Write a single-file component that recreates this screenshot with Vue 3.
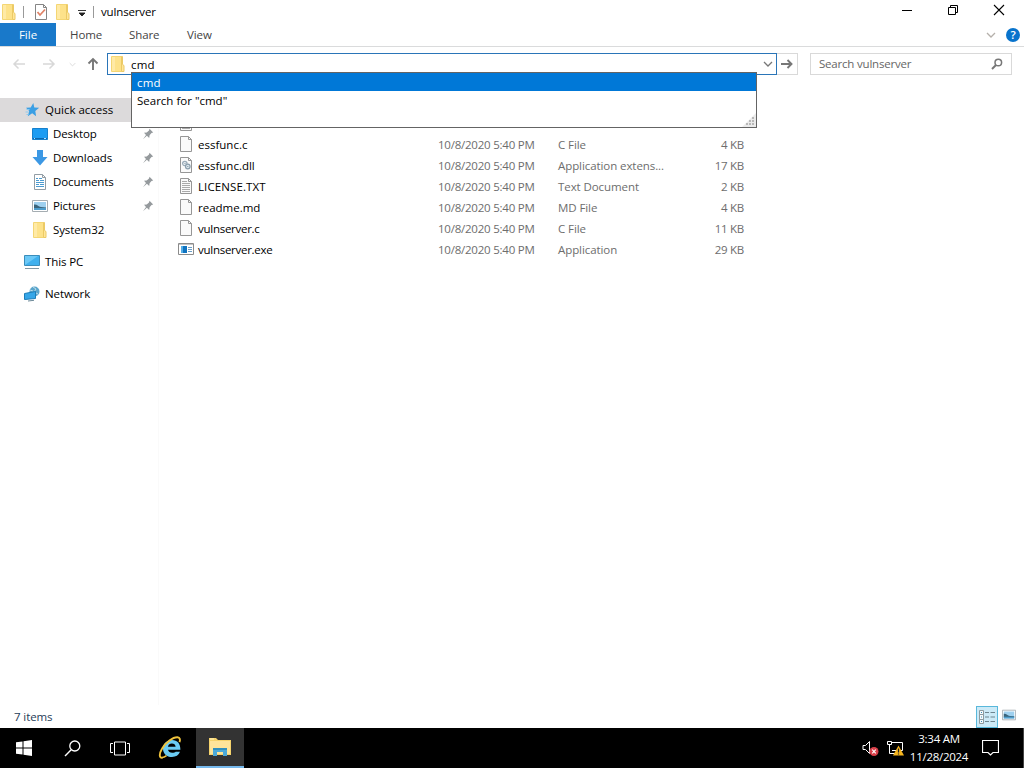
<template>
    <div class="desktop">
        <svg class="sprite" width="0" height="0">
            <symbol id="folder" viewBox="0 0 16 16">
                <path d="M1.500.5h10v15h-10z" fill="#fde28a" stroke="#f4d674" />
                <path d="M2 1h3v14H2z" fill="#ffeaa6" />
                <path d="M11.500.5h1v8l1.500 1v6h-2.500z" fill="#ffe699" stroke="#ecca65" />
            </symbol>
            <symbol id="page" viewBox="0 0 16 16">
                <path d="M2.500.5h8l3 3v12h-11z" fill="#fafafa" stroke="#969696" />
                <path d="M10.500.5v3h3" fill="none" stroke="#969696" />
            </symbol>
            <symbol id="text" viewBox="0 0 16 16">
                <use href="#page" />
                <path d="M4 3.500h5M4 5.500h8M4 7.500h8M4 9.500h8M4 11.500h8M4 13.500h8" stroke="#aaa" />
            </symbol>
            <symbol id="dll" viewBox="0 0 16 16">
                <use href="#page" />
                <circle cx="6.800" cy="6.500" r="2.200" fill="#eef3f6" stroke="#9aabb8" stroke-width="1.200" />
                <circle cx="9.800" cy="9.500" r="2.300" fill="#dce7ed" stroke="#8c9fad" stroke-width="1.200" />
                <path d="M6.500 6.500h1M9.300 9.500h1" stroke="#7c909e" />
            </symbol>
            <symbol id="exe" viewBox="0 0 16 16">
                <path d="M.5 2.500h15v11H.5z" fill="#fff" stroke="#8b8b8b" />
                <path d="M1 3h14v1H1z" fill="#c4c4c4" />
                <path d="M3 5h6v7H3z" fill="#0f73c0" />
                <path d="M3 5h2v7H3z" fill="#55aee6" />
                <path d="M10 6.500h4M10 8.500h4M10 10.500h4" stroke="#6b9fc8" />
            </symbol>
            <symbol id="star" viewBox="0 0 16 16">
                <path d="M9.300 1l1 4.600 4.900.1-3.900 3.200.8 5.400-3.900-3-4.400 2.900 1.400-5.100L2 5.800l4.700-.2z" fill="#3b9fe4" />
                <path d="M2.500 7.500h3M1.500 10h3M2.500 12.500h2" stroke="#8dcaf0" />
            </symbol>
            <symbol id="desktop" viewBox="0 0 16 16">
                <path d="M.5 2.500h15v11H.5z" fill="#1c9cf2" stroke="#1680cc" />
                <path d="M1 12h14v1H1z" fill="#0a66ad" />
                <path d="M2 12.500h1M12 12.500h2" stroke="#b7e1ff" />
            </symbol>
            <symbol id="download" viewBox="0 0 16 16">
                <path d="M5 0h6v7h4.500L8 15.500.5 7H5z" fill="#3c98e4" />
            </symbol>
            <symbol id="document" viewBox="0 0 16 16">
                <path d="M2.500.5h8l3 3v12h-11z" fill="#fff" stroke="#929da5" />
                <path d="M10.500.5v3h3" fill="none" stroke="#929da5" />
                <path d="M4 4.500h2M7 4.500h3M4 6.500h3M8 6.500h4M4 8.500h8M4 10.500h3M8 10.500h4M4 12.500h8" stroke="#4c9bd0" />
            </symbol>
            <symbol id="picture" viewBox="0 0 16 16">
                <path d="M.5 2.500h15v11H.5z" fill="#fff" stroke="#a5adb2" />
                <path d="M2 4h12v8H2z" fill="#9ed0ef" />
                <path d="M2 6.500c3-.5 4 2 7 2.500l5 .5v1H2z" fill="#3a647b" />
                <path d="M2 10h12v2H2z" fill="#4d9ccb" />
            </symbol>
            <symbol id="pc" viewBox="0 0 16 16">
                <path d="M.5 1.500h15v10H.5z" fill="#6bc8f6" stroke="#3a8dbb" />
                <path d="M1 11L14 2h1v9z" fill="#3fb0ee" />
                <path d="M1 14.500h14" stroke="#8198a5" />
            </symbol>
            <symbol id="network" viewBox="0 0 16 16">
                <circle cx="10.500" cy="5.500" r="5" fill="#5aa5cc" />
                <path d="M9 1l3 2-2 3 4 2M6 4l3 1" stroke="#bcdce8" fill="none" />
                <path d="M.5 7.500l11-2v7l-11 1z" fill="#35a6e8" stroke="#1c7db8" />
                <path d="M4 15l6-.7" stroke="#6c8998" />
            </symbol>
            <symbol id="pin" viewBox="0 0 12 12">
                <path d="M7.500.8l3.700 3.700-1.700.5L7.600 7.300l-.4 2.700-2.300-2.200L1 11.300 4 7 2 4.800l2.700-.3L7 2.500z" fill="#959a9d" />
            </symbol>
            <symbol id="back" viewBox="0 0 14 12">
                <path d="M13 6H2M6.500 1.500L2 6l4.500 4.500" fill="none" stroke="currentColor" stroke-width="1.500" />
            </symbol>
            <symbol id="chevron" viewBox="0 0 10 6">
                <path d="M1 1l4 4 4-4" fill="none" stroke="currentColor" stroke-width="1.300" />
            </symbol>
        </svg>

        <header class="titlebar">
            <svg class="icon title-folder"><use href="#folder" /></svg>
            <i class="divider"></i>
            <svg class="icon check-icon" viewBox="0 0 16 16">
                <path d="M2.500.5h8l3 3v12h-11z" fill="#fff" stroke="#858585" />
                <path d="M10.500.5v3h3" fill="none" stroke="#858585" />
                <path d="M4.500 8l2.500 3 5-5.500" fill="none" stroke="#e08367" stroke-width="1.800" />
            </svg>
            <svg class="icon new-folder"><use href="#folder" /></svg>
            <svg class="customize" viewBox="0 0 8 7"><path d="M0 .5h8M1 3h6L4 6z" stroke="#222" fill="#222" stroke-width=".9" /></svg>
            <i class="divider second"></i>
            <span class="title">vulnserver</span>
            <div class="window-buttons">
                <svg viewBox="0 0 12 12"><path d="M1 6.500h10" stroke="#000" /></svg>
                <svg viewBox="0 0 12 12"><path d="M1.500 3.500h7v7h-7zM3.500 3V1.500h7v7H9" fill="none" stroke="#000" /></svg>
                <svg viewBox="0 0 12 12"><path d="M1 1l10 10M11 1L1 11" stroke="#000" stroke-width="1.100" /></svg>
            </div>
        </header>

        <nav class="ribbon">
            <span class="file-tab">File</span>
            <span class="tab home">Home</span>
            <span class="tab share">Share</span>
            <span class="tab view">View</span>
            <svg class="ribbon-chevron"><use href="#chevron" /></svg>
            <span class="help">?</span>
        </nav>

        <div class="address-row">
            <div class="history">
                <svg><use href="#back" /></svg>
                <svg class="forward"><use href="#back" /></svg>
                <svg class="recent"><use href="#chevron" /></svg>
                <svg class="up" viewBox="0 0 12 14"><path d="M6 13V2M1.500 6.500L6 2l4.500 4.500" fill="none" stroke="#777" stroke-width="1.900" /></svg>
            </div>
            <div class="address">
                <svg class="icon"><use href="#folder" /></svg>
                <span>cmd</span>
                <svg class="address-chevron"><use href="#chevron" /></svg>
                <div class="suggestions">
                    <div class="suggestion selected">cmd</div>
                    <div class="suggestion">Search for "cmd"</div>
                    <svg class="grip" viewBox="0 0 14 14">
                        <path d="M14 0v14H0z" fill="#ebebeb" />
                        <path d="M10 4h2v2h-2zM7 7h2v2H7zM10 7h2v2h-2zM4 10h2v2H4zM7 10h2v2H7zM10 10h2v2h-2z" fill="#b9b9b9" />
                    </svg>
                </div>
            </div>
            <div class="go"><svg viewBox="0 0 14 12"><path d="M1 6h10.500M7.500 2l4 4-4 4" fill="none" stroke="#777" stroke-width="1.900" /></svg></div>
            <div class="search">
                <span>Search vulnserver</span>
                <svg viewBox="0 0 12 12"><circle cx="7.300" cy="4.500" r="3.300" fill="none" stroke="#777" stroke-width="1.500" /><path d="M5 7L1 11" stroke="#777" stroke-width="1.900" /></svg>
            </div>
        </div>

        <main class="explorer">
            <aside class="sidebar">
                <div v-for="item in places" :key="item.name" class="place" :class="item.type">
                    <svg class="icon"><use :href="'#' + item.icon" /></svg>
                    <span>{{ item.name }}</span>
                    <svg v-if="item.pinned" class="pin"><use href="#pin" /></svg>
                </div>
            </aside>
            <section class="files">
                <div v-for="file in files" :key="file.name" class="file">
                    <svg class="icon"><use :href="'#' + file.icon" /></svg>
                    <span class="name" :class="{ tight: file.tight, wide: file.wide }">{{ file.name }}</span>
                    <span class="date">10/8/2020 5:40 PM</span>
                    <span class="type">{{ file.type }}</span>
                    <span class="size">{{ file.size }}</span>
                </div>
            </section>
        </main>

        <footer class="status">
            <span>7 items</span>
            <div class="details">
                <svg viewBox="0 0 16 14">
                    <path d="M.5.500h4v4h-4zM.5 4.500h4v5h-4zM.5 9.500h4v4h-4z" fill="#f5fafc" stroke="#8d9a9f" />
                    <path d="M6 2.500h4M11.500 2.500H16M6 7h4M11.500 7H16M6 11.500h4M11.500 11.500H16" stroke="#6f858f" />
                    <path d="M2 2.500h1M2 7h1M2 11.500h1" stroke="#3a8db5" />
                </svg>
            </div>
            <svg class="thumbs"><use href="#picture" /></svg>
        </footer>

        <footer class="taskbar">
            <div class="task">
                <svg width="16" height="16" viewBox="0 0 16 16"><path d="M0 2.300L6.500 1.400v6.100H0zM7.500 1.200L16 0v7.500H7.500zM0 8.500h6.500v6.100L0 13.700zM7.500 8.500H16V16l-8.500-1.200z" fill="#fff" /></svg>
            </div>
            <div class="task">
                <svg width="17" height="17" viewBox="0 0 17 17"><circle cx="10.800" cy="6" r="5" fill="none" stroke="#fff" stroke-width="1.300" /><path d="M7.200 9.700L1 16" stroke="#fff" stroke-width="1.400" /></svg>
            </div>
            <div class="task">
                <svg width="20" height="15" viewBox="0 0 20 15"><path d="M4.500 1h11v13h-11zM3 2.500H.5v9H3M17 2.500h2.500v9H17" fill="none" stroke="#fff" /></svg>
            </div>
            <div class="task">
                <svg width="24" height="24" viewBox="0 0 24 24">
                    <path d="M22 15.800c-1.300 3.400-4.200 5.200-8 5.200-5.300 0-9-3.500-9-8.300 0-5 3.700-8.700 8.900-8.700 5.500 0 8.700 3.700 8.500 9.800H10c.4 2 2 3 4.200 3 1.700 0 2.800-.3 3.500-1z" fill="#6bcbf2" />
                    <path d="M9.900 10.700c.5-2.100 1.900-3.100 4-3.100s3.400 1.100 3.700 3.100z" fill="#000" />
                    <path d="M4.500 21.700c-3.600.6-3.500-4-.5-9C7.500 6.500 15.200 1 19.500 1.300c2.500.2 2.900 2.300 2 4.800" fill="none" stroke="#f0c33c" stroke-width="1.900" />
                    <path d="M4 21.500c1.400.1 3-.7 4.500-1.900" fill="none" stroke="#f0c33c" stroke-width="1.600" />
                </svg>
            </div>
            <div class="task active">
                <svg width="22" height="20" viewBox="0 0 22 20">
                    <path d="M0 1h7l2 2h13v15H0z" fill="#f5d36c" />
                    <path d="M1 4h20v13H1z" fill="#fde49a" />
                    <path d="M4 19v-8h14v8h-4v-4H8v4z" fill="#4ba9d8" />
                    <path d="M4 11h14v2H4z" fill="#2f8fbd" />
                    <path d="M1 2h4" stroke="#fff3bd" />
                </svg>
            </div>
            <div class="tray">
                <svg class="volume" width="18" height="16" viewBox="0 0 18 16">
                    <path d="M1 5.500h2.500l4-4v12l-4-4H1z" fill="none" stroke="#fff" />
                    <circle cx="12" cy="11.500" r="4.500" fill="#d9404a" />
                    <path d="M10.200 9.700l3.600 3.600M13.800 9.700l-3.600 3.600" stroke="#fff" stroke-width="1.200" />
                </svg>
                <svg class="wired" width="17" height="16" viewBox="0 0 17 16">
                    <path d="M.5 1.500h4v3h-4zM5 2.500h10.500v8H5M2.500 5v8.500H8" fill="none" stroke="#fff" />
                    <path d="M11.500 5.500L17 15.500H6z" fill="#f6b51e" />
                    <path d="M11.500 8.500v4M11.500 13.500v1" stroke="#222" stroke-width="1.200" />
                </svg>
                <div class="clock"><span>3:34 AM</span><span>11/28/2024</span></div>
                <svg class="message" width="17" height="16" viewBox="0 0 17 16"><path d="M.5.500h16v12H11L8.500 15 6 12.500H.5z" fill="none" stroke="#fff" stroke-width="1.200" /></svg>
            </div>
        </footer>
    </div>
</template>

<script setup>
    const places = [
        { name: 'Quick access', icon: 'star', type: 'root current' },
        { name: 'Desktop', icon: 'desktop', pinned: true },
        { name: 'Downloads', icon: 'download', pinned: true },
        { name: 'Documents', icon: 'document', pinned: true },
        { name: 'Pictures', icon: 'picture', pinned: true },
        { name: 'System32', icon: 'folder' },
        { name: 'This PC', icon: 'pc', type: 'root spaced' },
        { name: 'Network', icon: 'network', type: 'root spaced' }
    ]

    const files = [
        { name: 'COMPILING.TXT', icon: 'text', type: 'Text Document', size: '3 KB' },
        { name: 'essfunc.c', icon: 'page', type: 'C File', size: '4 KB' },
        { name: 'essfunc.dll', icon: 'dll', type: 'Application extens...', size: '17 KB' },
        { name: 'LICENSE.TXT', icon: 'text', type: 'Text Document', size: '2 KB', wide: true },
        { name: 'readme.md', icon: 'page', type: 'MD File', size: '4 KB' },
        { name: 'vulnserver.c', icon: 'page', type: 'C File', size: '11 KB', tight: true },
        { name: 'vulnserver.exe', icon: 'exe', type: 'Application', size: '29 KB', tight: true }
    ]
</script>

<style>
    body {
        margin: 0;
        overflow: hidden;
    }
</style>

<style scoped>
    .desktop {
        display: flex;
        flex-direction: column;
        width: 1024px;
        height: 768px;
        background: #fff;
        color: #000;
        font-family: "Open Sans", "Noto Sans", sans-serif;
        font-size: 11.5px;
        line-height: 16px;
        white-space: nowrap;
    }

    .desktop * {
        box-sizing: border-box;
    }

    svg {
        display: block;
        flex: none;
    }

    .sprite {
        position: absolute;
    }

    .icon {
        width: 16px;
        height: 16px;
    }

    .titlebar {
        display: flex;
        align-items: center;
        height: 23px;
        flex: none;
    }

    .title-folder {
        margin-left: 1px;
        margin-right: 6px;
    }

    .divider {
        width: 1px;
        height: 12px;
        background: #999;
    }

    .check-icon {
        margin-left: 9px;
    }

    .new-folder {
        margin-left: 6px;
    }

    .customize {
        width: 8px;
        height: 7px;
        margin-left: 7px;
        margin-top: 3px;
    }

    .second {
        margin-left: 7px;
    }

    .title {
        margin-left: 7px;
        letter-spacing: -0.15px;
    }

    .window-buttons {
        display: flex;
        gap: 34px;
        margin-left: auto;
        margin-right: 19px;
        margin-bottom: 3px;
    }

    .window-buttons svg {
        width: 12px;
        height: 12px;
    }

    .ribbon {
        display: flex;
        align-items: center;
        height: 24px;
        border-bottom: 1px solid #dadbdc;
        color: #444;
        flex: none;
    }

    .file-tab {
        width: 56px;
        height: 23px;
        line-height: 23px;
        text-align: center;
        color: #fff;
        background: #1979ca;
    }

    .tab {
        letter-spacing: -0.1px;
    }

    .home {
        margin-left: 14px;
        width: 59px;
    }

    .share {
        width: 58px;
    }

    .ribbon-chevron {
        width: 10px;
        height: 6px;
        margin-left: auto;
        color: #b5b0aa;
    }

    .help {
        width: 14px;
        height: 14px;
        margin-left: 10px;
        margin-right: 4px;
        border-radius: 50%;
        background: #0873cc;
        color: #fff;
        font-weight: 600;
        line-height: 14px;
        text-align: center;
    }

    .address-row {
        display: flex;
        height: 51px;
        padding-top: 6px;
        flex: none;
    }

    .history {
        display: flex;
        align-items: center;
        width: 107px;
        height: 22px;
        padding-left: 12px;
        color: #d8d8d8;
    }

    .history svg {
        width: 14px;
        height: 12px;
    }

    .history .forward {
        margin-left: 16px;
        transform: scaleX(-1);
    }

    .history .recent {
        width: 7px;
        height: 5px;
        margin-left: 13px;
    }

    .history .up {
        width: 12px;
        height: 14px;
        margin-left: 11px;
    }

    .address {
        position: relative;
        display: flex;
        align-items: center;
        width: 670px;
        height: 22px;
        padding-left: 2px;
        border: 1px solid #2a75b8;
    }

    .address > span {
        margin-left: 5px;
        margin-top: 1px;
        letter-spacing: 0.2px;
    }

    .address-chevron {
        width: 10px;
        height: 6px;
        margin-left: auto;
        margin-right: 3px;
        color: #777;
    }

    /* The list overlaps the address bar and the first file row */
    .suggestions {
        position: absolute;
        z-index: 2;
        top: 18px;
        left: 23px;
        width: 626px;
        height: 56px;
        border: 1px solid #646464;
        background: #fff;
    }

    .suggestion {
        height: 18px;
        line-height: 19px;
        padding-left: 5px;
    }

    .selected {
        background: #0078d7;
        color: #fff;
        letter-spacing: 0.2px;
    }

    .grip {
        position: absolute;
        right: 0;
        bottom: 0;
        width: 14px;
        height: 14px;
    }

    .go {
        display: flex;
        align-items: center;
        justify-content: center;
        width: 21px;
        height: 22px;
        border: 1px solid #d9d9d9;
        border-left: none;
    }

    .go svg {
        width: 14px;
        height: 12px;
    }

    .search {
        display: flex;
        align-items: center;
        justify-content: space-between;
        width: 202px;
        height: 22px;
        margin-left: 12px;
        padding: 0 8px;
        border: 1px solid #d9d9d9;
        color: #666;
        letter-spacing: -0.2px;
    }

    .search svg {
        width: 12px;
        height: 12px;
    }

    .explorer {
        display: flex;
        height: 607px;
        flex: none;
    }

    .sidebar {
        width: 159px;
        border-right: 1px solid #fafafa;
    }

    .place {
        display: flex;
        align-items: center;
        height: 24px;
        padding-left: 32px;
    }

    .place span {
        margin-left: 5px;
        letter-spacing: -0.1px;
    }

    .root {
        padding-left: 24px;
    }

    .current {
        background: #dcdadb;
    }

    .current span {
        letter-spacing: 0;
    }

    .spaced {
        margin-top: 8px;
    }

    .pin {
        width: 12px;
        height: 12px;
        margin-left: auto;
        margin-right: 4px;
    }

    .files {
        padding-top: 15px;
        padding-left: 19px;
    }

    .file {
        display: grid;
        grid-template-columns: 20px 240px 120px 120px 66px;
        align-items: center;
        height: 21px;
        color: #6d6d6d;
    }

    .file .icon {
        margin-top: -1px;
    }

    .name {
        color: #000;
    }

    .tight {
        letter-spacing: -0.27px;
    }

    .wide {
        letter-spacing: 0.1px;
    }

    .date {
        letter-spacing: -0.23px;
    }

    .type {
        letter-spacing: -0.08px;
    }

    .size {
        text-align: right;
        letter-spacing: -0.25px;
    }

    .status {
        display: flex;
        align-items: center;
        height: 23px;
        padding-left: 14px;
        color: #263c57;
        letter-spacing: -0.1px;
        flex: none;
    }

    .details {
        display: flex;
        align-items: center;
        justify-content: center;
        width: 22px;
        height: 22px;
        margin-left: auto;
        border: 1px solid #59b8db;
        background: #cceaf7;
    }

    .details svg {
        width: 16px;
        height: 14px;
    }

    .thumbs {
        width: 14px;
        height: 14px;
        margin-left: 4px;
        margin-right: 8px;
        margin-bottom: 3px;
    }

    .taskbar {
        display: flex;
        height: 40px;
        background: #000;
        flex: none;
    }

    .task {
        display: flex;
        align-items: center;
        justify-content: center;
        width: 48px;
        height: 40px;
    }

    .task:nth-child(4) {
        width: 52px;
    }

    .active {
        background: #333;
        border-bottom: 2px solid #76b9ed;
    }

    .tray {
        display: flex;
        align-items: center;
        margin-left: auto;
        width: 162px;
        border-right: 1px solid #444;
        color: #fff;
    }

    .wired {
        margin-left: 7px;
    }

    .clock {
        display: flex;
        flex-direction: column;
        align-items: center;
        width: 58px;
        margin-left: 6px;
        line-height: 18px;
        letter-spacing: -0.27px;
    }

    .message {
        margin-left: 14px;
    }
</style>
